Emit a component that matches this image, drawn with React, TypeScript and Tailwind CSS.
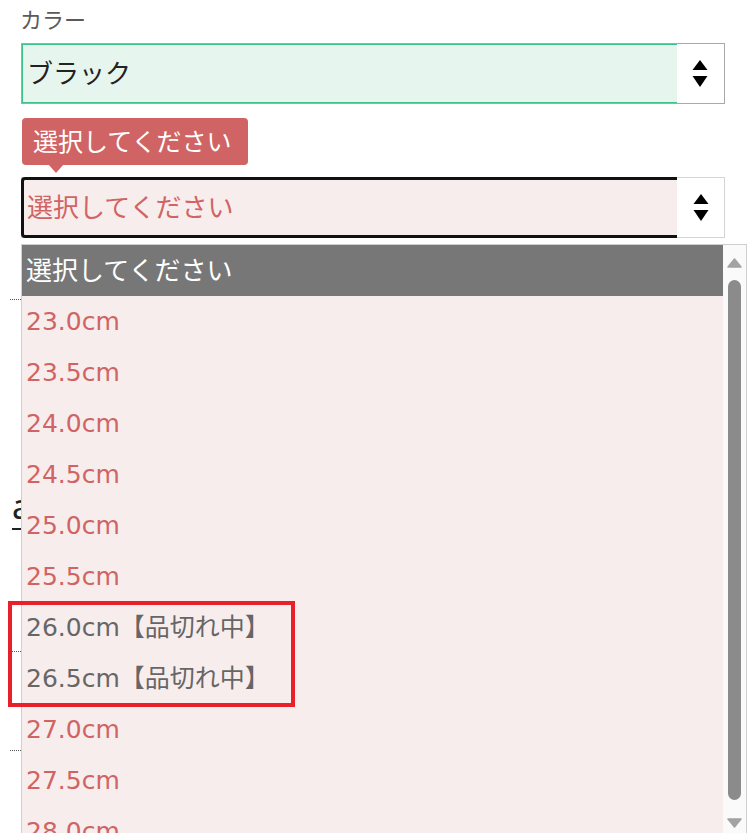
import React from "react"

const sizes = [
  { label: "23.0cm", soldOut: false },
  { label: "23.5cm", soldOut: false },
  { label: "24.0cm", soldOut: false },
  { label: "24.5cm", soldOut: false },
  { label: "25.0cm", soldOut: false },
  { label: "25.5cm", soldOut: false },
  { label: "26.0cm【品切れ中】", soldOut: true },
  { label: "26.5cm【品切れ中】", soldOut: true },
  { label: "27.0cm", soldOut: false },
  { label: "27.5cm", soldOut: false },
  { label: "28.0cm", soldOut: false },
]

function Arrows() {
  return (
    <svg width="16" height="28" viewBox="0 0 16 28" className="block">
      <path d="M8 0 L15.5 10 L0.5 10 Z" fill="#000" />
      <path d="M0.5 16 L15.5 16 L8 27 Z" fill="#000" />
    </svg>
  )
}

export default function App() {
  return (
    <div
      className="relative w-[749px] h-[833px] overflow-hidden bg-white"
      style={{ fontFamily: '"Noto Sans", "Noto Sans CJK JP", sans-serif' }}
    >
      {/* form */}
      <div className="pl-[21px] pt-[4px]">
        <div className="text-[22px] leading-[30px] text-[#5a5a5a] -ml-[1px]">カラー</div>

        {/* color select */}
        <div className="mt-[9px] flex h-[61px] w-[704px] border border-[#a9a9a9]">
          <div className="flex flex-1 items-center border-y border-l border-[#3cc28a] bg-[#e6f6ef] pl-[4px] text-[26px] text-[#222]">
            ブラック
          </div>
          <div className="flex w-[47px] items-center justify-center bg-white pr-[1px]">
            <Arrows />
          </div>
        </div>

        {/* tooltip */}
        <div className="relative mt-[14px] ml-[1px] flex h-[47px] w-[226px] items-center rounded-[4px] bg-[#d06464] pl-[11px] text-[25px] text-white">
          選択してください
          <div className="absolute left-[26px] top-[46px] h-0 w-0 border-x-[8px] border-t-[9px] border-x-transparent border-t-[#d06464]" />
        </div>

        {/* size select */}
        <div className="mt-[12px] flex h-[61px] w-[704px] border border-[#d4d4d4]">
          <div className="-my-[1px] -ml-[1px] flex flex-1 items-center rounded-l-[4px] border-[3px] border-r-0 border-[#111] bg-[#f8eded] pl-[3px] text-[26px] text-[#d06464]">
            選択してください
          </div>
          <div className="flex w-[47px] items-center justify-center bg-white">
            <Arrows />
          </div>
        </div>
      </div>

      {/* page content under the open list */}
      <div className="pl-[10px] pt-[61px] pr-[2px]">
        <div className="border-t border-dotted border-[#555]" />
        <div className="mt-[186px] ml-[2px] w-[300px] border-b-2 border-[#222] pb-[2px] text-[34px] leading-[40px] text-[#222]">
          a
        </div>
        <div className="mt-[121px] border-t border-dotted border-[#555]" />
        <div className="mt-[98px] border-t border-dotted border-[#555]" />
      </div>

      {/* open dropdown list */}
      <div className="absolute left-[21px] top-[244px] flex w-[726px] border-l border-t border-r border-[#cfcfcf] bg-[#f8eded]">
        <div className="flex-1">
          <div className="flex h-[51px] items-center bg-[#777777] pl-[4px] text-[26px] text-white">
            選択してください
          </div>
          {sizes.map((s) => (
            <div
              key={s.label}
              className={`flex h-[51px] items-center pl-[4px] text-[25px] ${
                s.soldOut ? "text-[#666]" : "text-[#d06464]"
              }`}
              style={{ fontFamily: '"DejaVu Sans", "Noto Sans CJK JP", sans-serif' }}
            >
              {s.label}
            </div>
          ))}
        </div>
        <div className="flex w-[23px] flex-col items-center bg-[#fafafa] pt-[13px]">
          <svg width="15" height="10" viewBox="0 0 15 10">
            <path d="M7.5 1 L14 9 L1 9 Z" fill="#a3a3a3" stroke="#a3a3a3" strokeLinejoin="round" strokeWidth="1.5" />
          </svg>
          <div className="mt-[12px] h-[520px] w-[13px] rounded-full bg-[#8b8b8b]" />
          <svg width="15" height="10" viewBox="0 0 15 10" className="mt-[18px]">
            <path d="M1 1 L14 1 L7.5 9 Z" fill="#a3a3a3" stroke="#a3a3a3" strokeLinejoin="round" strokeWidth="1.5" />
          </svg>
        </div>
      </div>

      {/* annotation */}
      <div className="absolute left-[8px] top-[601px] h-[106px] w-[287px] border-4 border-[#e8202a]" />
    </div>
  )
}
